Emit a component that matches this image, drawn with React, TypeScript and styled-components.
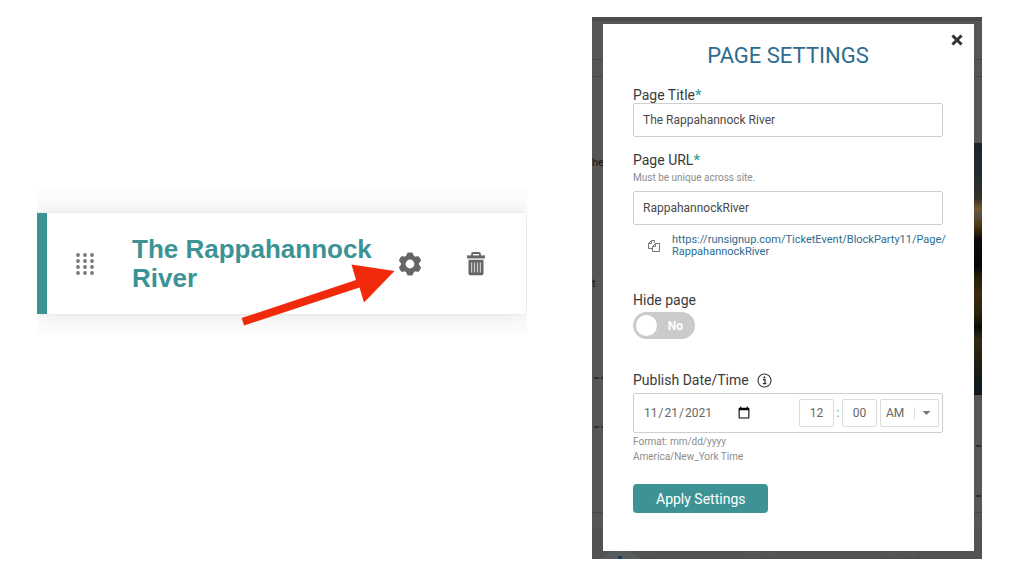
import React, { useState } from "react";
import styled, { createGlobalStyle } from "styled-components";

const GlobalStyle = createGlobalStyle`
  *, *::before, *::after { box-sizing: border-box; }
  body { margin: 0; background: #fff; font-family: Roboto, "Liberation Sans", sans-serif; color: #3b3b3b; }
  button, input, select { font-family: inherit; margin: 0; }
`;

const Page = styled.main`
  display: grid;
  grid-template-columns: 490fr 390fr;
  column-gap: 65px;
  align-items: start;
  padding: 17px 42px 17px 37px;
`;

const CardFrame = styled.section`
  position: relative;
  margin-top: 172px;
  padding: 24px 0 20px;
  overflow: hidden;
  background: #fcfcfc;
`;

const Card = styled.article`
  display: flex;
  align-items: center;
  min-height: 101px;
  padding-right: 36px;
  margin-right: 1px;
  border-left: 10px solid #3d9394;
  background: #fff;
  box-shadow: 0 0 18px rgba(0, 0, 0, 0.1), 0 0 2px rgba(0, 0, 0, 0.08);
`;

const IconButton = styled.button`
  display: grid;
  place-items: center;
  flex: none;
  width: 28px;
  height: 28px;
  padding: 0;
  border: 0;
  background: none;
  color: #666;
  cursor: pointer;
`;

const DragHandle = styled(IconButton)`
  margin: 0 33px 0 24px;
  cursor: grab;
`;

const CardTitle = styled.h2`
  flex: 1;
  margin: 0;
  color: #3d9394;
  font: bold 26px/29px "Liberation Sans", Arial, sans-serif;
`;

const CardActions = styled.div`
  display: flex;
  gap: 38px;
  margin-left: 20px;
`;

const Arrow = styled.svg`
  position: absolute;
  left: 204px;
  top: 73px;
  pointer-events: none;
`;

const Backdrop = styled.div`
  position: relative;
  padding: 7px 8px 8px 11px;
  background: #565656;
  overflow: hidden;
`;

const Behind = styled.div<{ $side: "left" | "right" }>`
  position: absolute;
  top: 0;
  bottom: 0;
  ${(p) => p.$side}: 0;
  width: ${(p) => (p.$side === "left" ? "11px" : "8px")};
  overflow: hidden;
  color: #161616;
  font-size: 11px;
  line-height: 12px;
`;

const Strip = styled.div<{ $edge: "top" | "bottom" }>`
  position: absolute;
  left: 0;
  right: 0;
  ${(p) => p.$edge}: 0;
  height: ${(p) => (p.$edge === "top" ? "4px" : "31px")};
  background: ${(p) => (p.$edge === "top" ? "#4c4c4c" : "#505352")};
`;

const Rule = styled.i<{ $y: number; $dash?: boolean }>`
  position: absolute;
  left: ${(p) => (p.$dash ? "2px" : "0")};
  right: 0;
  top: ${(p) => p.$y}px;
  height: ${(p) => (p.$dash ? "2px" : "1px")};
  background: ${(p) => (p.$dash ? "repeating-linear-gradient(90deg, #303030 0 5px, #565656 5px 7px)" : "#484848")};
`;

const Scrap = styled.span<{ $y: number }>`
  position: absolute;
  left: 0;
  top: ${(p) => p.$y}px;
`;

const Photo = styled.div`
  position: absolute;
  top: 126px;
  left: 0;
  right: 0;
  height: 252px;
  background: linear-gradient(#18242b, #252d31 14%, #35312b 22%, #6f582f 26%, #554e3e 29%, #4d3610 33%, #0b0c06 38%, #050807 49%, #241c0a 53%, #3a2b0d 60%, #2b210d 68%, #0b0d0b 73%, #332811 78%, #211e13 88%, #0e1b1d 96%);
`;

const FootArt = styled.svg`
  position: absolute;
  left: 0;
  bottom: 0;
  width: 100%;
`;

const Dialog = styled.div`
  position: relative;
  padding: 19px 31px 38px 30px;
  background: #fff;
`;

const CloseButton = styled.button`
  position: absolute;
  top: 7px;
  right: 8px;
  display: grid;
  place-items: center;
  width: 18px;
  height: 18px;
  padding: 0;
  border: 0;
  background: none;
  color: #333;
  cursor: pointer;
`;

const Heading = styled.h1`
  margin: 0 0 19px;
  color: #2e6c90;
  font-size: 22px;
  font-weight: 400;
  line-height: 25px;
  text-align: center;
`;

const Form = styled.form`
  display: flex;
  flex-direction: column;
`;

const Field = styled.div<{ $gap: number }>`
  display: flex;
  flex-direction: column;
  align-items: flex-start;
  margin-bottom: ${(p) => p.$gap}px;
`;

const Label = styled.label`
  display: flex;
  align-items: center;
  font-size: 14px;
  line-height: 16px;
`;

const Required = styled.span`
  color: #3aa0a2;
  font-weight: 700;
`;

const Hint = styled.p`
  margin: 0;
  color: #8d8d8d;
  font-size: 10px;
  line-height: 15px;
`;

const TextInput = styled.input`
  width: 100%;
  height: 34px;
  padding: 0 9px;
  border: 1px solid #cfcfcf;
  border-radius: 2px;
  background: #fff;
  color: #4a4a4a;
  font-size: 12px;
`;

const UrlHint = styled(Hint)`
  margin: 2px 0 6px;
`;

const LinkRow = styled.div`
  display: flex;
  align-items: center;
  gap: 11px;
  margin-top: 9px;
  padding-left: 14px;
`;

const CopyButton = styled.button`
  display: flex;
  padding: 0;
  border: 0;
  background: none;
  color: #777;
  cursor: pointer;
`;

const PageLink = styled.a`
  color: #2e6c90;
  font-size: 11px;
  line-height: 12px;
  text-decoration: none;
`;

const Toggle = styled.label`
  position: relative;
  display: flex;
  align-items: center;
  width: 62px;
  height: 27px;
  margin-top: 4px;
  padding: 0 12px 0 3px;
  border-radius: 14px;
  background: #cbcbcb;
  color: #fff;
  font-size: 12px;
  font-weight: 700;
  justify-content: space-between;
  cursor: pointer;
`;

const ToggleInput = styled.input`
  position: absolute;
  inset: 0;
  width: 100%;
  height: 100%;
  opacity: 0;
`;

const Knob = styled.span`
  width: 21px;
  height: 21px;
  border-radius: 50%;
  background: #fff;
`;

const InfoIcon = styled.svg`
  margin-left: 8px;
`;

const DateBox = styled.div`
  display: flex;
  align-items: center;
  width: 100%;
  height: 40px;
  margin: 5px 0 1px;
  padding: 0 3px 0 9px;
  border: 1px solid #cfcfcf;
  border-radius: 2px;
`;

const DateInput = styled.input`
  width: 108px;
  margin-right: auto;
  padding: 0;
  border: 0;
  background: none;
  color: #666;
  font-size: 12px;

  &::-webkit-calendar-picker-indicator {
    width: 14px;
    height: 14px;
    padding: 0;
  }
`;

const TimeInput = styled.input`
  width: 35px;
  height: 28px;
  padding: 0;
  border: 1px solid #dcdcdc;
  border-radius: 2px;
  color: #666;
  font-size: 12px;
  text-align: center;
`;

const Colon = styled.span`
  width: 8px;
  color: #4aa3c4;
  font-size: 12px;
  line-height: 14px;
  text-align: center;
`;

const SelectBox = styled.div`
  display: flex;
  align-items: center;
  position: relative;
  width: 59px;
  height: 28px;
  margin-left: 3px;
`;

const Meridiem = styled.select`
  width: 100%;
  height: 100%;
  padding: 0 0 0 5px;
  border: 1px solid #dcdcdc;
  border-radius: 2px;
  appearance: none;
  background: #fff;
  color: #666;
  font-size: 12px;
`;

const Caret = styled.svg`
  position: absolute;
  right: 7px;
  pointer-events: none;
`;

const ApplyButton = styled.button`
  align-self: flex-start;
  height: 29px;
  padding: 0 23px;
  border: 0;
  border-radius: 4px;
  background: #3d9394;
  color: #fff;
  font-size: 14px;
  cursor: pointer;
`;

const dotColumns = [2, 9, 16];
const dotRows = [2, 8, 14, 20];
const toothAngles = [0, 60, 120, 180, 240, 300];

function GearIcon() {
  return (
    <svg width="24" height="24" viewBox="-12 -12 24 24" aria-hidden="true">
      <circle r="6.700" fill="none" stroke="currentColor" strokeWidth="4.600" />
      {toothAngles.map((angle) => (
        <path key={angle} d="M-4.300 -7L-2.900 -10.600Q-2.600 -11.500 -1.700 -11.500H1.700Q2.600 -11.500 2.900 -10.600L4.300 -7z" fill="currentColor" transform={`rotate(${angle})`} />
      ))}
    </svg>
  );
}

function PageCard() {
  return (
    <CardFrame>
      <Card>
        <DragHandle type="button" aria-label="Reorder page">
          <svg width="18" height="22" viewBox="0 0 18 22" fill="#777">
            {dotRows.map((y) => dotColumns.map((x) => <circle key={`${x}-${y}`} cx={x} cy={y} r="1.900" />))}
          </svg>
        </DragHandle>
        <CardTitle>The Rappahannock River</CardTitle>
        <CardActions>
          <IconButton type="button" aria-label="Page settings">
            <GearIcon />
          </IconButton>
          <IconButton type="button" aria-label="Delete page">
            <svg width="20" height="24" viewBox="0 0 20 24">
              <path d="M6 4V2.200Q6 1 7.200 1h5.600Q14 1 14 2.200V4" fill="none" stroke="#666" strokeWidth="1.800" />
              <path d="M1 3.400h18v3H1z" fill="#666" />
              <path d="M2.500 7.800h15v13.700q0 1.800-1.800 1.800H4.300Q2.500 23.300 2.500 21.500z" fill="#666" />
              <path d="M5.600 10.500v10M8.500 10.500v10M11.500 10.500v10M14.400 10.500v10" stroke="#ccc" strokeWidth="1.200" />
            </svg>
          </IconButton>
        </CardActions>
      </Card>
      <Arrow width="158" height="66" viewBox="0 0 158 66" aria-hidden="true">
        <path d="M0.700 56 L115 18 L110.500 2.500 L153.500 9 L123 40.500 L118.500 25.500 L3 63.500z" fill="#f02a0a" />
      </Arrow>
    </CardFrame>
  );
}

function SettingsDialog() {
  const [title, setTitle] = useState("The Rappahannock River");
  const [slug, setSlug] = useState("RappahannockRiver");
  const [hidden, setHidden] = useState(false);

  return (
    <Dialog role="dialog" aria-labelledby="dialog-title">
      <CloseButton type="button" aria-label="Close">
        <svg width="12" height="12" viewBox="0 0 12 12">
          <path d="M2.500 2.500l7 7M9.500 2.500l-7 7" stroke="currentColor" strokeWidth="3" strokeLinecap="square" />
        </svg>
      </CloseButton>
      <Heading id="dialog-title">PAGE SETTINGS</Heading>
      <Form onSubmit={(e) => e.preventDefault()}>
        <Field $gap={15}>
          <Label htmlFor="page-title">Page Title<Required>*</Required></Label>
          <TextInput id="page-title" value={title} onChange={(e) => setTitle(e.target.value)} />
        </Field>
        <Field $gap={34}>
          <Label htmlFor="page-url">Page URL<Required>*</Required></Label>
          <UrlHint>Must be unique across site.</UrlHint>
          <TextInput id="page-url" value={slug} onChange={(e) => setSlug(e.target.value)} />
          <LinkRow>
            <CopyButton type="button" aria-label="Copy link">
              <svg width="14" height="14" viewBox="0 0 14 14" fill="none" stroke="currentColor">
                <path d="M5 9.500H1.500V4.500L4.500 1.500H7.500V4M1.500 4.500H4.500V1.500M8.500 4.500H12.500V12.500H5.500V7.500zM5.500 7.500H8.500V4.500" />
              </svg>
            </CopyButton>
            <PageLink href="#page">
              https://runsignup.com/TicketEvent/BlockParty11/Page/<wbr />RappahannockRiver
            </PageLink>
          </LinkRow>
        </Field>
        <Field $gap={33}>
          <Label htmlFor="hide-page">Hide page</Label>
          <Toggle>
            <ToggleInput id="hide-page" type="checkbox" checked={hidden} onChange={(e) => setHidden(e.target.checked)} />
            <Knob />
            {hidden ? "Yes" : "No"}
          </Toggle>
        </Field>
        <Field $gap={20}>
          <Label htmlFor="publish-date">
            Publish Date/Time
            <InfoIcon width="15" height="15" viewBox="0 0 15 15" aria-hidden="true">
              <circle cx="7.500" cy="7.500" r="6.500" fill="none" stroke="#444" strokeWidth="1.200" />
              <path d="M6 6.500h2v4M5.800 10.700h3.600" fill="none" stroke="#333" strokeWidth="1.300" />
              <circle cx="7.500" cy="4.200" r="1" fill="#333" />
            </InfoIcon>
          </Label>
          <DateBox>
            <DateInput id="publish-date" type="date" defaultValue="2021-11-21" />
            <TimeInput aria-label="Hour" defaultValue="12" />
            <Colon>:</Colon>
            <TimeInput aria-label="Minute" defaultValue="00" />
            <SelectBox>
              <Meridiem aria-label="AM or PM" defaultValue="AM">
                <option>AM</option>
                <option>PM</option>
              </Meridiem>
              <Caret width="18" height="12" viewBox="0 0 18 12" aria-hidden="true">
                <path d="M0.500 0v12" stroke="#ddd" />
                <path d="M8.500 4h8l-4 4z" fill="#777" />
              </Caret>
            </SelectBox>
          </DateBox>
          <Hint>Format: mm/dd/yyyy</Hint>
          <Hint>America/New_York Time</Hint>
        </Field>
        <ApplyButton type="submit">Apply Settings</ApplyButton>
      </Form>
    </Dialog>
  );
}

export default function App() {
  return (
    <>
      <GlobalStyle />
      <Page>
        <PageCard />
        <Backdrop>
          <Strip $edge="top" />
          <Strip $edge="bottom" />
          <Behind $side="left" aria-hidden="true">
            <Rule $y={42} />
            <Rule $y={59} />
            <Scrap $y={140}>he</Scrap>
            <Scrap $y={261}>t</Scrap>
            <Rule $y={360} $dash />
            <Rule $y={409} $dash />
            <Rule $y={495} />
          </Behind>
          <Behind $side="right" aria-hidden="true">
            <Rule $y={42} />
            <Rule $y={59} />
            <Photo />
            <Rule $y={428} $dash />
            <Rule $y={478} $dash />
            <Rule $y={495} />
          </Behind>
          <FootArt height="9" aria-hidden="true">
            <path d="M10 9q4-8 18-9h2q14 1 18 9z" fill="#565a5a" />
            <path d="M26 6h4v3h-4z" fill="#173a70" />
            <g fill="#5d5556" fontSize="7" fontWeight="700">
              <text x="50" y="7">ION</text>
              <text x="150" y="7">ODUCTION</text>
              <text x="290" y="7">ODUCTION</text>
            </g>
          </FootArt>
          <SettingsDialog />
        </Backdrop>
      </Page>
    </>
  );
}
